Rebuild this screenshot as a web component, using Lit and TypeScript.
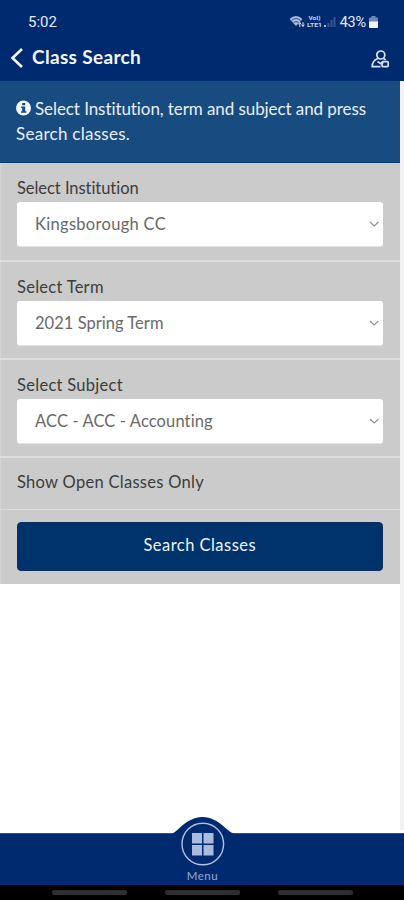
import { LitElement, html, css } from "lit";
import { customElement, property } from "lit/decorators.js";
import { styleMap } from "lit/directives/style-map.js";

@customElement("select-field")
class SelectField extends LitElement {
  @property() label = "";
  @property() value = "";
  @property({ type: Number }) labelGap = 0;
  @property({ type: Number }) valueGap = 0;
  static styles = css`
    :host { display: block; height: 98px; box-sizing: border-box; padding: 15px 17px 0; border-bottom: 2px solid #dedede; }
    .label { height: 24px; line-height: 20px; font-size: 16.5px; color: #3c3c3c; white-space: nowrap; }
    .box { display: flex; align-items: center; justify-content: space-between; height: 45px; box-sizing: border-box;
      padding: 0 3px 1px 18px; background: #fff; border: 0 solid #e4e4e4; border-bottom-width: 1px; border-radius: 3px; color: #696969; font-size: 16.5px; white-space: nowrap; }
    svg { display: block; }
  `;
  render() {
    return html`<div class="label" style=${styleMap({ letterSpacing: `${this.labelGap}px` })}>${this.label}</div>
      <div class="box"><span style=${styleMap({ letterSpacing: `${this.valueGap}px` })}>${this.value}</span>
        <svg width="12" height="8" viewBox="0 0 12 8" fill="none" stroke="#929292" stroke-width="1.2"><path d="M2 2l4.2 4L10.4 2" /></svg>
      </div>`;
  }
}

@customElement("app-root")
class AppRoot extends LitElement {
  static styles = css`
    :host { display: flex; flex-direction: column; position: relative; width: 404px; height: 900px; overflow: hidden; background: #fff; font-family: Lato, sans-serif; font-variant-ligatures: none; }
    svg { display: block; }
    .status { height: 40px; flex: none; box-sizing: border-box; padding: 4px 26px 0 28px; display: flex; align-items: center; justify-content: space-between;
      background: #002a70; color: #e3e9f8; font: 400 15px Roboto, sans-serif; }
    .signals { display: flex; align-items: center; gap: 3px; }
    .percent { font-size: 14.5px; letter-spacing: -0.2px; }
    .bar { height: 41px; flex: none; display: flex; align-items: center; box-sizing: border-box; padding: 0 14px 6px 9px; background: #002a70; color: #f4f6fc; }
    .title { flex: 1; margin: -2px 0 0 8px; font-size: 19px; font-weight: 700; letter-spacing: 0.33px; }
    .person { margin-top: 3px; }
    .main { flex: 1; display: flex; background: #fff; min-height: 0; }
    .page { flex: 1; }
    .gutter { width: 4.5px; background: #f2f2f2; margin-bottom: 3px; }
    .info { height: 82px; box-sizing: border-box; padding: 15px 16px 0; background: #184b80; border-bottom: 1px solid #073d79; color: #e9eff8; font-size: 17px; line-height: 25px; white-space: nowrap; }
    .line { display: flex; align-items: center; gap: 4px; height: 25px; }
    .line svg { margin-top: -2px; }
    .first { letter-spacing: -0.08px; }
    .second { letter-spacing: 0.27px; }
    .form { background: #cbcbcb; height: 421px; border-left: 1px solid #d4d4d4; box-sizing: border-box; }
    .form select-field { margin-left: -1px; }
    .form select-field:first-child { height: 99px; }
    .toggle { height: 52px; box-sizing: border-box; padding-left: 16px; line-height: 48px; font-size: 16.5px; letter-spacing: 0.29px; border-bottom: 1px solid #dadada; color: #3c3c3c; white-space: nowrap; }
    .action { padding: 12px 17px 0 16px; }
    .button { display: block; width: 100%; height: 49px; padding: 0 0 3px; border: 1px solid #0a2f60; border-radius: 4px; background: #00326c; color: #eef3fa; font: 16.5px Lato, sans-serif; letter-spacing: 0.47px; }
    .nav { height: 52px; flex: none; display: flex; flex-direction: column; align-items: center; justify-content: flex-end; background: #002a70; position: relative; border-top: 1px solid #304f8b; box-sizing: border-box; }
    .hump { position: absolute; left: 172px; top: -18px; }
    .menu { font-size: 11.5px; line-height: 14px; margin: 0 0 2px 1px; color: #96a9d3; letter-spacing: 0.5px; }
    .system { height: 15px; flex: none; display: flex; justify-content: center; gap: 38px; background: #000; }
    .pill { width: 75px; height: 5px; margin-top: 5px; border-radius: 2px; background: #2e2e2e; }
  `;

  render() {
    return html`
      <div class="status">
        <span class="clock">5:02</span>
        <div class="signals">
          <svg width="48" height="14" viewBox="0 0 48 14">
            <path d="M0.5 4Q7-2 13.5 4L7 11Z" fill="#aab9db" />
            <path d="M2.5 5.3Q7 1.8 11.5 5.3M4.5 7.5Q7 5.5 9.5 7.5" fill="none" stroke="#123978" stroke-width="0.8" />
            <path d="M10.8 12V7.5m-1.3 1.8l1.3-1.8 1.3 1.8M14 7v4.5m-1.3-1.8L14 11.5l1.3-1.8" fill="none" stroke="#d6def1" stroke-width="1" />
            <g fill="#cbd5ec" font-family="Roboto" font-weight="700" font-size="5">
              <text x="19.5" y="5.2" textLength="12" lengthAdjust="spacingAndGlyphs">VoI)</text>
              <text x="18" y="11.7" textLength="15" lengthAdjust="spacingAndGlyphs">LTE1</text>
            </g>
            <path d="M35 10h2v2h-2z" fill="#a9b8da" />
            <path d="M38.5 8h2v4h-2zM41.5 5h2v7h-2zM44.5 2h2v10h-2z" fill="#345690" />
          </svg>
          <span class="percent">43%</span>
          <svg width="9" height="12" viewBox="0 0 9 12"><path d="M2.5 0h4v1.5H8q1 0 1 1V6H0V2.5q0-1 1-1h1.5z" fill="#7187b3" /><path d="M0 5.5h9V11q0 1-1 1H1q-1 0-1-1z" fill="#eff3fc" /></svg>
        </div>
      </div>
      <div class="bar">
        <svg width="15" height="22" viewBox="0 0 15 22" fill="none" stroke="#f4f6fc" stroke-width="2.6"><path d="M13 2L3.5 11 13 20" /></svg>
        <span class="title">Class Search</span>
        <svg class="person" width="20" height="20" viewBox="0 0 20 20" fill="none" stroke="#d9e1f4" stroke-width="1.7">
          <circle cx="10.8" cy="6" r="4" />
          <path d="M7.8 9.5Q2 12 2.2 17.6H10.5M13.7 9.5l2 1.4M7.5 12.5l3.5 2.3 2.5-1.5" />
          <rect x="12" y="12.7" width="6.2" height="4.9" rx="1" />
        </svg>
      </div>
      <div class="main">
        <div class="page">
          <div class="info">
            <div class="line">
              <svg width="15" height="16" viewBox="0 0 15 16"><circle cx="7.5" cy="8" r="7.5" fill="#f3f6fb" /><path d="M6.2 3h3v2.2h-3zM5.2 6.5h4v4.7h1.2v1.5H5v-1.5h1.2V8h-1z" fill="#184b80" /></svg>
              <span class="first">Select Institution, term and subject and press</span>
            </div>
            <div class="second">Search classes.</div>
          </div>
          <div class="form">
            <select-field label="Select Institution" value="Kingsborough CC" .labelGap=${-0.05} .valueGap=${0.3}></select-field>
            <select-field label="Select Term" value="2021 Spring Term" .labelGap=${0.27} .valueGap=${0.03}></select-field>
            <select-field label="Select Subject" value="ACC - ACC - Accounting" .labelGap=${0.29} .valueGap=${0.12}></select-field>
            <div class="toggle">Show Open Classes Only</div>
            <div class="action"><button class="button">Search Classes</button></div>
          </div>
        </div>
        <div class="gutter"></div>
      </div>
      <div class="nav">
        <svg class="hump" width="62" height="52" viewBox="0 0 62 52">
          <path d="M0 18Q3 16 7 12.5C15 5 22 1 30.5 1S46 5 54 12.5Q58 16 62 18V24H0z" fill="#002a70" />
          <circle cx="30.8" cy="28" r="20.8" fill="#002a70" stroke="#b3bfdf" stroke-width="1.4" />
          <path d="M20 17h10v10.5H20zM31.5 17h10v10.5h-10zM20 29h10v10.5H20zM31.5 29h10v10.5h-10z" fill="#a9bce0" />
        </svg>
        <span class="menu">Menu</span>
      </div>
      <div class="system"><div class="pill"></div><div class="pill"></div><div class="pill"></div></div>
    `;
  }
}
